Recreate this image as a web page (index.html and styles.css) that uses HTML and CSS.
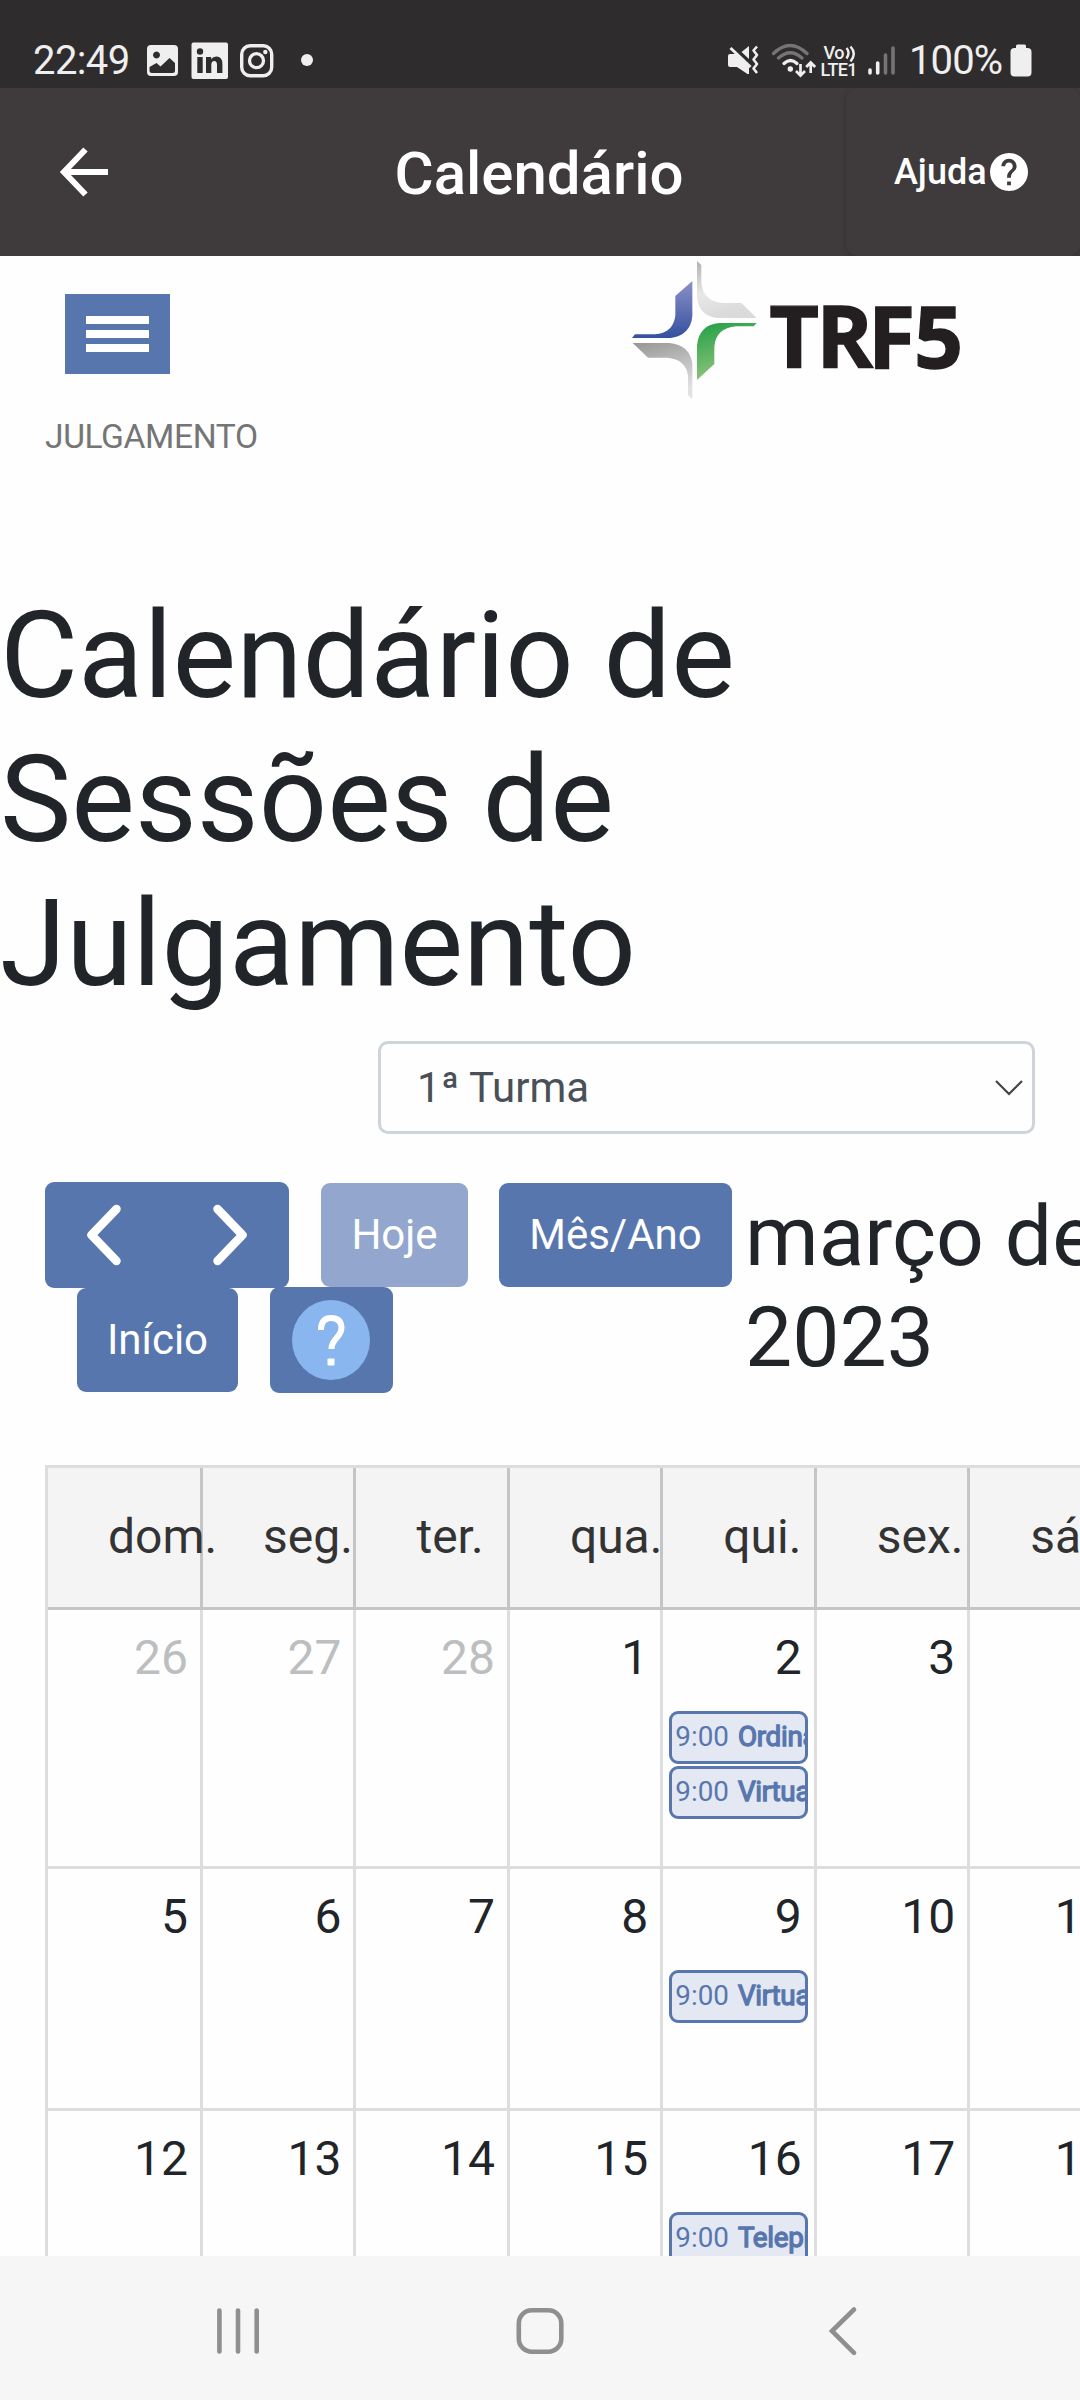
FILE: index.html
```html
<!DOCTYPE html>
<html lang="pt-BR">
<head>
<meta charset="utf-8">
<title>Calendário</title>
<link rel="stylesheet" href="styles.css">
</head>
<body>
<div class="screen">
  <div class="status">
    <span class="clock">22:49</span>
    <svg class="status-left" width="170" height="40" viewBox="145 40 170 40">
      <path fill="#efefef" fill-rule="evenodd" d="M151 45h23a4 4 0 0 1 4 4v23a4 4 0 0 1-4 4h-23a4 4 0 0 1-4-4V49a4 4 0 0 1 4-4zM156.500 51.500a3.500 3.500 0 1 0 .01 0zM149.500 67v3.500q0 2.500 2.500 2.500h20.500q2.500 0 2.500-2.500V63l-5.500-5-9 8.500-4-3.500z"/>
      <rect x="191.500" y="42.500" width="36.500" height="36.500" rx="2" fill="#efefef"/>
      <g fill="#2f2c2d"><circle cx="200" cy="51.500" r="3.200"/><path d="M197.300 57h5.400v16h-5.400zM206 57h5.200v2.200q1.600-2.700 5.200-2.700 6 0 6 7.500v9h-5.400v-8q0-4-2.700-4-3 0-3 4v8H206z"/></g>
      <rect x="241.700" y="45.700" width="30" height="30" rx="8.500" fill="none" stroke="#efefef" stroke-width="3.400"/>
      <circle cx="256.500" cy="60.700" r="7" fill="none" stroke="#efefef" stroke-width="3.300"/>
      <circle cx="265.300" cy="52" r="2.200" fill="#efefef"/>
      <circle cx="307" cy="60" r="6" fill="#efefef"/>
    </svg>
    <svg class="status-right" width="175" height="40" viewBox="725 40 175 40">
      <path fill="#efefef" d="M730 54h6l13 12v8h-1.500L737 67h-7q-2 0-2-2v-9q0-2 2-2zM749 46v13l-7.500-7z"/>
      <path d="M730.500 48l20 19" stroke="#efefef" stroke-width="3"/>
      <path d="M757 46.500l-3.500 4 3.500 4.500-3.500 4.500 3.500 4.500-3.500 4.500 3.500 4.500" fill="none" stroke="#efefef" stroke-width="2.600" stroke-linejoin="round"/>
      <g fill="none" stroke-width="3.300" stroke-linecap="round"><path d="M773.500 53.500q16.500-16 33.500 0M778.500 58q12-10.500 23.500 0" stroke="#777475"/><path d="M784 63.500q6.500-6 13 0" stroke="#efefef"/></g>
      <circle cx="790.300" cy="69" r="2.700" fill="#efefef"/>
      <path d="M800.500 64v11M796 71l4.500 4.500 4.500-4.500M810.700 73V62M806.200 67l4.500-4.500 4.500 4.500" fill="none" stroke="#efefef" stroke-width="2.700"/>
      <text x="823.500" y="58.800" class="volte" textLength="21">Vo</text>
      <path d="M846.500 48q4 4.500 0 10.500M850.500 46.500q6.500 7 0 15" fill="none" stroke="#efefef" stroke-width="2.400"/>
      <text x="820.500" y="76" class="volte" textLength="37">LTE1</text>
      <g stroke-width="3.600" stroke-linecap="round"><path d="M870 70v3M877.700 63v10" stroke="#efefef"/><path d="M885.500 55v18M893 48v25" stroke="#777475"/></g>
    </svg>
    <span class="percent">100%</span>
    <svg class="battery" width="22" height="33" viewBox="0 0 22 33"><path fill="#efefef" d="M7.500 0.500h7q1.500 0 1.500 1.500v2h1.500a4 4 0 0 1 4 4v20.500a4 4 0 0 1-4 4h-13a4 4 0 0 1-4-4V8a4 4 0 0 1 4-4H6V2Q6 .5 7.500 .5z"/></svg>
  </div>
  <header class="appbar">
    <svg class="back" width="52" height="52" viewBox="0 0 52 52"><path d="M26.500 3.500L5 26l21.500 22.500M4.500 26H49" fill="none" stroke="#fff" stroke-width="6"/></svg>
    <h2 class="appbar-title">Calendário</h2>
    <div class="help"><span>Ajuda</span><svg width="38" height="38" viewBox="2 2 20 20"><path fill="#fff" d="M12 2C6.480 2 2 6.480 2 12s4.480 10 10 10 10-4.480 10-10S17.520 2 12 2zm1 17h-2v-2h2v2zm2.070-7.750l-.9.920C13.450 12.900 13 13.500 13 15h-2v-.5c0-1.100.45-2.100 1.170-2.830l1.240-1.260c.37-.36.59-.86.59-1.410 0-1.100-.9-2-2-2s-2 .9-2 2H8c0-2.210 1.790-4 4-4s4 1.790 4 4c0 .88-.36 1.680-.93 2.250z"/></svg></div>
  </header>
  <main class="page">
    <div class="brandbar">
      <div class="burger"><i></i><i></i><i></i></div>
      <svg class="logo" width="340" height="144" viewBox="90 18 1020 432">
        <defs>
          <linearGradient id="bl" x1="0" y1="0" x2="0" y2="1"><stop offset="0" stop-color="#8b90c8"/><stop offset="1" stop-color="#3450a0"/></linearGradient>
          <linearGradient id="gr" x1="0" y1="0" x2="0.300" y2="1"><stop offset="0" stop-color="#20a045"/><stop offset="1" stop-color="#93c47d"/></linearGradient>
          <linearGradient id="g1" x1="0" y1="0" x2="0.300" y2="1"><stop offset="0" stop-color="#b0b0b0"/><stop offset=".55" stop-color="#e8e8e8"/><stop offset="1" stop-color="#dadada"/></linearGradient>
          <linearGradient id="g2" x1="0" y1="0" x2="0.300" y2="1"><stop offset="0" stop-color="#969696"/><stop offset="1" stop-color="#e2e2e2"/></linearGradient>
        </defs>
        <path fill="url(#bl)" d="M277 93V198Q272 255 212 264H96L105 253H165Q218 250 226 198V138Z"/>
        <path fill="url(#g1)" d="M291 33L304 45V98Q310 155 370 159H424L470 204H352Q298 198 291 143Z"/>
        <path fill="url(#gr)" d="M470 219L461 229H408Q348 234 343 290V342L291 390V285Q298 224 358 219Z"/>
        <path fill="url(#g2)" d="M98 279H208Q268 284 277 340V448L264 436V378Q258 328 202 323H144Z"/>
        <text class="logo-text" y="353" x="508 649 804 942">TRF5</text>
      </svg>
    </div>
    <div class="crumb">JULGAMENTO</div>
    <h1 class="title">Calendário de<br>Sessões de<br>Julgamento</h1>
    <div class="select"><span>1ª Turma</span><svg width="30" height="18" viewBox="0 0 30 18"><path d="M2 2L15 15 28 2" fill="none" stroke="#444" stroke-width="2.200"/></svg></div>
    <div class="toolbar">
      <div class="buttons">
        <div class="btn-row">
          <div class="btn arrows">
            <svg width="36" height="62" viewBox="0 0 36 62"><path d="M30.500 5L5.500 31l25 26" /></svg>
            <svg width="36" height="62" viewBox="0 0 36 62"><path d="M5.500 5l25 26-25 26" /></svg>
          </div>
          <div class="btn today">Hoje</div>
          <div class="btn month">Mês/Ano</div>
        </div>
        <div class="btn-row second">
          <div class="btn home">Início</div>
          <div class="btn question"><svg width="80" height="82" viewBox="0 0 80 82"><ellipse cx="39" cy="41" rx="39" ry="40" fill="#8ab6f0"/><path d="M29 31v-2q1-10 10-10 10 0 10.500 9.500 0 5-5 10.500-5 5.500-5 11" fill="none" stroke="#fff" stroke-width="6"/><rect x="35.500" y="59.500" width="7" height="7" rx="1" fill="#fff"/></svg></div>
        </div>
      </div>
      <h2 class="period">março de<br>2023</h2>
    </div>
    <div class="cal">
      <div class="row head"><div>dom.</div><div>seg.</div><div>ter.</div><div>qua.</div><div>qui.</div><div>sex.</div><div>sáb.</div></div>
      <div class="row w1">
        <div class="off"><b>26</b></div><div class="off"><b>27</b></div><div class="off"><b>28</b></div><div><b>1</b></div>
        <div><b>2</b><p class="event"><span>9:00</span><strong>Ordinária</strong></p><p class="event"><span>9:00</span><strong>Virtual</strong></p></div>
        <div><b>3</b></div><div><b>4</b></div>
      </div>
      <div class="row w2">
        <div><b>5</b></div><div><b>6</b></div><div><b>7</b></div><div><b>8</b></div>
        <div><b>9</b><p class="event"><span>9:00</span><strong>Virtual</strong></p></div>
        <div><b>10</b></div><div><b>11</b></div>
      </div>
      <div class="row w3">
        <div><b>12</b></div><div><b>13</b></div><div><b>14</b></div><div><b>15</b></div>
        <div><b>16</b><p class="event"><span>9:00</span><strong>Telepresencial</strong></p></div>
        <div><b>17</b></div><div><b>18</b></div>
      </div>
    </div>
  </main>
  <nav class="nav">
    <svg width="1080" height="144" viewBox="0 2256 1080 144" fill="none" stroke="#8f8f8f" stroke-width="4.600" stroke-linecap="round">
      <path d="M219.400 2310.500v41M238 2310.500v41M256.700 2310.500v41"/>
      <rect x="518.800" y="2310.300" width="42.500" height="41.500" rx="13"/>
      <path d="M854 2309.500L832 2331l22 21.800"/>
    </svg>
  </nav>
</div>
</body>
</html>
```
FILE: styles.css
```css
* { box-sizing: border-box; }
body { margin: 0; background: #fefefe; font-family: Roboto, sans-serif; color: #212529; }
h1, h2, p { margin: 0; font-weight: 400; }
svg { display: block; flex: none; }

.screen { width: 1080px; height: 2400px; display: flex; flex-direction: column; overflow: hidden; }

.status { flex: none; height: 88px; background: #2f2c2d; color: #efefef; display: flex; align-items: flex-start; padding-left: 33px; font-size: 40px; line-height: 40px; }
.clock { width: 112px; padding-top: 41px; letter-spacing: -.6px; white-space: nowrap; }
.status-left { margin-top: 40px; }
.status-right { margin: 40px 0 0 410px; }
.percent { width: 110px; padding: 41px 0 0 9px; letter-spacing: -.9px; white-space: nowrap; }
.battery { margin-top: 44px; }
.volte { font: 500 18px Roboto, sans-serif; fill: #efefef; }

.appbar { flex: none; height: 168px; background: #3f3a3b; color: #fff; display: flex; align-items: center; }
.back { margin: 0 0 0 59px; }
.appbar-title { width: 735px; text-align: center; padding-left: 121px; font-size: 60px; line-height: 70px; font-weight: 500; margin-top: 3px; }
.help { align-self: stretch; width: 234px; display: flex; align-items: center; padding-left: 48px; gap: 3px; font-size: 36px; font-weight: 500; border-radius: 12px; box-shadow: 0 1px 5px rgba(0, 0, 0, .2); clip-path: inset(0 0 0 -8px); }

.page { flex: none; height: 2000px; overflow: hidden; display: flex; flex-direction: column; }
.brandbar { flex: none; height: 144px; display: flex; padding-left: 65px; }
.burger { width: 105px; height: 80px; margin-top: 38px; background: #5876ae; display: flex; flex-direction: column; gap: 6px; padding: 22px 21px 0; }
.burger i { height: 8px; background: #fff; }
.logo { margin-left: 460px; }
.logo-text { font: 700 258px "Open Sans", sans-serif; fill: #231f20; stroke: #231f20; stroke-width: 4px; }
.crumb { flex: none; height: 184px; padding: 17px 0 0 45px; font-size: 33.600px; letter-spacing: -.4px; line-height: 40px; color: #757575; }
.title { flex: none; height: 457px; font-size: 120px; line-height: 144px; }
.select { flex: none; width: 657px; height: 93px; margin-left: 378px; border: 3px solid #ced4da; border-radius: 10px; display: flex; align-items: center; justify-content: space-between; padding: 0 8px 0 36px; font-size: 42px; line-height: 60px; color: #495057; }
.toolbar { flex: none; height: 283px; margin-top: 48px; padding-left: 45px; display: flex; align-items: flex-start; }
.buttons { flex: none; width: 700px; }
.btn-row { display: flex; align-items: center; height: 106px; gap: 32px; }
.second { padding-left: 32px; height: 104px; }
.btn { height: 104px; border-radius: 9px; background: #5876ae; color: #fff; font-size: 42px; line-height: 103px; text-align: center; }
.arrows { width: 244px; height: 106px; display: flex; justify-content: space-between; align-items: center; padding: 0 41px; }
.arrows path { fill: none; stroke: #fff; stroke-width: 8.500; stroke-linecap: round; stroke-linejoin: round; }
.today { width: 147px; background: #93a6cd; }
.month { width: 233px; margin-left: -1px; }
.home { width: 161px; }
.question { width: 123px; height: 106px; display: flex; align-items: center; justify-content: center; }
.period { font-size: 84px; line-height: 101px; padding-top: 4px; white-space: nowrap; }

.cal { flex: none; width: 1077px; margin-left: 45px; border: 3px solid #ddd; }
.row { display: grid; grid-template-columns: 155px repeat(6, 153.450px); }
.row > div { border-right: 3px solid #ddd; border-bottom: 3px solid #ddd; min-width: 0; }
.head { background: #f4f4f4; height: 142px; font-size: 48px; color: #333; line-height: 72px; }
.head > div { border-color: #c5c5c5; padding: 33px 0 0 60px; white-space: nowrap; }
.w1 { height: 259px; }
.w2 { height: 242px; }
.w3 { height: 242px; }
.row b { display: block; font-weight: 400; font-size: 48px; line-height: 72px; padding: 12px 12px 0 0; height: 101px; text-align: right; }
.off b { color: #bcbebf; }
.event { height: 53px; margin: 0 6px 2px; border: 3px solid #5876ae; border-radius: 9px; background: #e3e8f3; color: #5876ae; font-size: 27.800px; line-height: 46px; display: flex; gap: 9px; padding-left: 3px; white-space: nowrap; overflow: hidden; }
.event strong { font-weight: 400; letter-spacing: -.3px; -webkit-text-stroke: 1.300px #5876ae; }

.nav { flex: none; height: 144px; background: #f6f6f6; }
```
